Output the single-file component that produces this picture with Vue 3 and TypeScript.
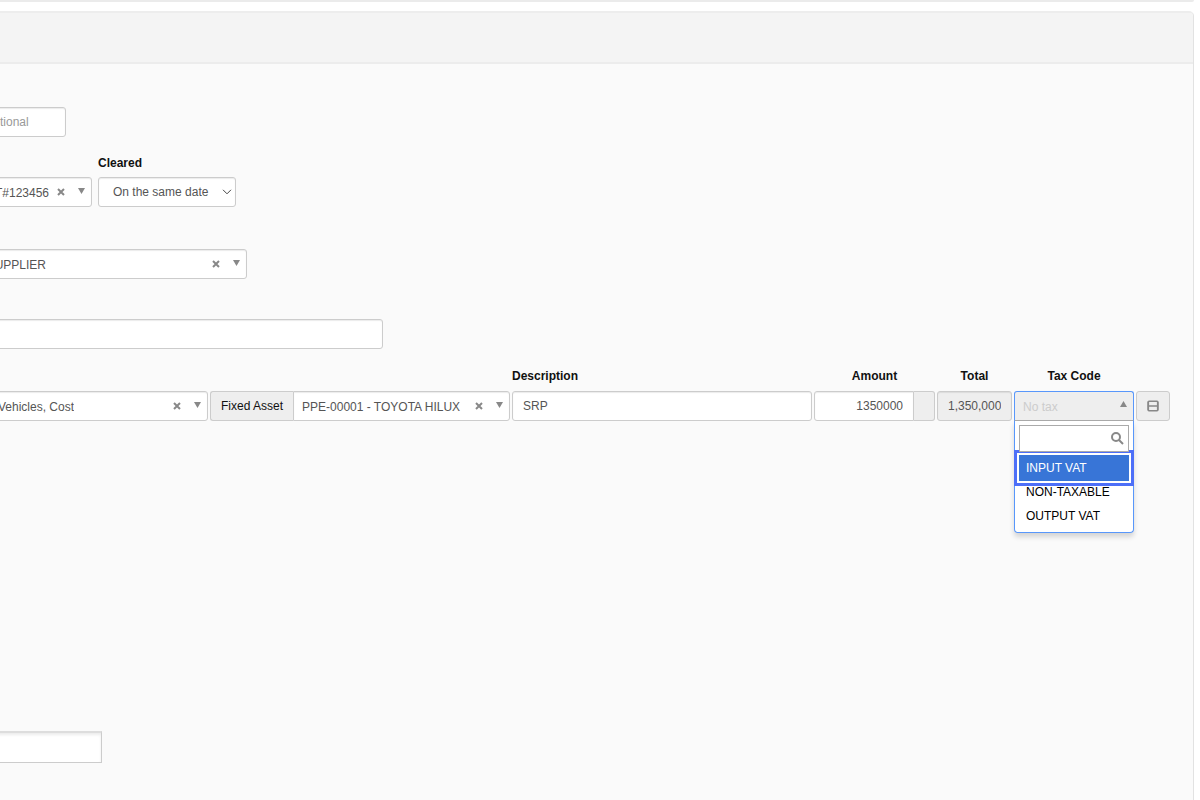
<script setup lang="ts">
import { ref } from 'vue'

const reference = ref('')
const notes = ref('')
const footer = ref('')
const description = ref('SRP')
const amount = ref('1350000')
const search = ref('')
const taxCodes: string[] = ['INPUT VAT', 'NON-TAXABLE', 'OUTPUT VAT']
const active = ref('INPUT VAT')
</script>

<template>
  <div class="page">
    <div class="strip"></div>
    <main class="panel">
      <header class="panel-head"></header>
      <form class="form" @submit.prevent>
        <input v-model="reference" class="field reference" type="text" placeholder="Optional" aria-label="Reference" />

        <div class="row cleared-row">
          <div class="picker searchable account">
            <select class="field" aria-label="Account"><option>CT#123456</option></select>
            <button class="clear" type="button" aria-label="Clear account">
              <svg viewBox="0 0 8 8"><path d="M1 1L7 7M7 1L1 7" /></svg>
            </button>
            <svg class="arrow" viewBox="0 0 7 6"><path d="M0 0H7L3.5 6Z" /></svg>
          </div>
          <div class="cell cleared">
            <label for="cleared">Cleared</label>
            <div class="picker">
              <select id="cleared" class="field"><option>On the same date</option></select>
              <svg class="chevron" viewBox="0 0 10 6"><path d="M1 .8L5 4.8L9 .8" /></svg>
            </div>
          </div>
        </div>

        <div class="picker searchable supplier">
          <select class="field" aria-label="Supplier"><option>SUPPLIER</option></select>
          <button class="clear" type="button" aria-label="Clear supplier">
            <svg viewBox="0 0 8 8"><path d="M1 1L7 7M7 1L1 7" /></svg>
          </button>
          <svg class="arrow" viewBox="0 0 7 6"><path d="M0 0H7L3.5 6Z" /></svg>
        </div>

        <input v-model="notes" class="field notes" type="text" aria-label="Notes" />

        <div class="lines">
          <div class="picker searchable ledger">
            <select class="field" aria-label="Ledger account"><option>Vehicles, Cost</option></select>
            <button class="clear" type="button" aria-label="Clear ledger account">
              <svg viewBox="0 0 8 8"><path d="M1 1L7 7M7 1L1 7" /></svg>
            </button>
            <svg class="arrow" viewBox="0 0 7 6"><path d="M0 0H7L3.5 6Z" /></svg>
          </div>

          <div class="group">
            <label class="addon" for="asset">Fixed Asset</label>
            <div class="picker searchable asset">
              <select id="asset" class="field"><option>PPE-00001 - TOYOTA HILUX</option></select>
              <button class="clear" type="button" aria-label="Clear fixed asset">
                <svg viewBox="0 0 8 8"><path d="M1 1L7 7M7 1L1 7" /></svg>
              </button>
              <svg class="arrow" viewBox="0 0 7 6"><path d="M0 0H7L3.5 6Z" /></svg>
            </div>
          </div>

          <div class="cell">
            <label for="description">Description</label>
            <input id="description" v-model="description" class="field" type="text" />
          </div>

          <div class="cell centered">
            <label for="amount">Amount</label>
            <div class="group">
              <input id="amount" v-model="amount" class="field amount" type="text" />
              <span class="addon end"></span>
            </div>
          </div>

          <div class="cell centered">
            <label for="total">Total</label>
            <input id="total" class="field total" type="text" value="1,350,000" readonly />
          </div>

          <div class="cell centered tax">
            <label for="tax">Tax Code</label>
            <button id="tax" class="tax-toggle" type="button" aria-haspopup="listbox" aria-expanded="true">
              <span>No tax</span>
              <svg class="up" viewBox="0 0 7 6"><path d="M0 6H7L3.5 0Z" /></svg>
            </button>
            <div class="menu">
              <div class="search">
                <input v-model="search" type="text" aria-label="Search tax codes" />
                <svg class="glass" viewBox="0 0 13 13"><circle cx="5" cy="5" r="4" /><path d="M8 8L12 12" /></svg>
              </div>
              <ul role="listbox" aria-label="Tax codes">
                <li
                  v-for="code in taxCodes"
                  :key="code"
                  role="option"
                  :aria-selected="code === active"
                  :class="{ active: code === active }"
                  @click="active = code"
                >{{ code }}</li>
              </ul>
            </div>
          </div>

          <button class="more" type="button" aria-label="Line options">
            <svg viewBox="0 0 12 12"><rect x="1" y="1.2" width="10" height="9.6" rx="1" /><path d="M1.4 2V10M10.6 2V10M1 6H11" /></svg>
          </button>
        </div>

        <input v-model="footer" class="field footer" type="text" aria-label="Footer" />
      </form>
    </main>
  </div>
</template>

<style>
body {
  margin: 0;
  background: #fff;
}
</style>

<style scoped>
.page,
.page * {
  box-sizing: border-box;
}
.page {
  min-height: 100vh;
  display: flex;
  flex-direction: column;
  padding-right: 6px;
  overflow: hidden;
  color: #111;
  font: 12px/18px "Liberation Sans", Arial, sans-serif;
}
.strip {
  height: 2px;
  margin-bottom: 9px;
  background: #ebebeb;
  border-radius: 0 0 4px 0;
}
.panel {
  flex: 1;
  background: #fafafa;
  border-top: 2px solid #ededed;
  border-right: 1px solid #e2e2e2;
  border-radius: 0 5px 0 0;
}
.panel-head {
  height: 51px;
  background: #f4f4f4;
  border-bottom: 2px solid #ececec;
  border-radius: 0 4px 0 0;
}
.form {
  display: flex;
  flex-direction: column;
  align-items: flex-start;
  margin-left: -31px;
  padding: 43px 23px 37px 0;
}
.field {
  display: block;
  width: 100%;
  height: 30px;
  margin: 0;
  padding: 0 10px;
  border: 1px solid #ccc;
  border-radius: 3px;
  background: #fff;
  box-shadow: inset 0 1px 1px rgba(0, 0, 0, 0.08);
  color: #555;
  font: inherit;
  outline: none;
  appearance: none;
}
.field::placeholder {
  color: #999;
  opacity: 1;
}
label {
  font-weight: bold;
}
.reference {
  width: 97px;
  padding-left: 14px;
}
.row {
  display: flex;
  align-items: flex-end;
  gap: 6px;
}
.cleared-row {
  margin-top: 17px;
}
.cell {
  display: flex;
  flex-direction: column;
  gap: 6px;
}
.centered > label {
  text-align: center;
}
.picker {
  position: relative;
}
.picker .field {
  padding-left: 8px;
}
.searchable .field {
  padding-top: 2px;
}
.account {
  width: 123px;
}
.account .field {
  padding-right: 42px;
  text-align-last: right;
}
.cleared {
  width: 138px;
  gap: 5px;
}
.cleared .field {
  padding-left: 14px;
}
.supplier {
  width: 278px;
  margin-top: 42px;
}
.supplier .field {
  padding-right: 200px;
  text-align-last: right;
}
.notes {
  width: 414px;
  margin-top: 40px;
}
.ledger .field {
  padding-right: 133px;
  text-align-last: right;
}
.clear {
  position: absolute;
  top: 11px;
  right: 27px;
  width: 8px;
  height: 8px;
  padding: 0;
  border: 0;
  background: none;
}
.clear svg {
  display: block;
  fill: none;
  stroke: #888;
  stroke-width: 2;
}
.arrow {
  position: absolute;
  top: 11px;
  right: 7px;
  width: 7px;
  height: 6px;
  fill: #888;
}
.chevron {
  position: absolute;
  top: 12px;
  right: 4px;
  width: 10px;
  height: 6px;
  fill: none;
  stroke: #444;
}
.lines {
  align-self: stretch;
  display: grid;
  grid-template-columns: 239px 300px minmax(0, 1fr) 121px 75px 120px 34px;
  gap: 2px;
  align-items: end;
  margin-top: 18px;
}
.group {
  display: flex;
}
.addon {
  flex: none;
  height: 30px;
  padding: 0 10px;
  border: 1px solid #ccc;
  border-right: 0;
  border-radius: 3px 0 0 3px;
  background: #eee;
  font-weight: normal;
  line-height: 28px;
}
.addon.end {
  width: 21px;
  border: 1px solid #ccc;
  border-left: 0;
  border-radius: 0 3px 3px 0;
}
.asset {
  flex: 1;
}
.asset .field {
  border-radius: 0 3px 3px 0;
}
.amount {
  flex: 1;
  min-width: 0;
  border-radius: 3px 0 0 3px;
  text-align: right;
}
.total {
  background: #eee;
  text-align: right;
}
.tax {
  position: relative;
}
.tax-toggle {
  display: flex;
  align-items: center;
  justify-content: space-between;
  height: 30px;
  padding: 2px 6px 0 8px;
  border: 1px solid #5897fb;
  border-bottom-color: #aaa;
  border-radius: 3px 3px 0 0;
  background: #eee;
  color: #ccc;
  font: inherit;
}
.up {
  width: 7px;
  height: 6px;
  margin-bottom: 6px;
  fill: #888;
}
.menu {
  position: absolute;
  top: 100%;
  left: 0;
  width: 100%;
  padding-top: 4px;
  border: 1px solid #5897fb;
  border-top: 0;
  border-radius: 0 0 4px 4px;
  background: #fff;
  box-shadow: 0 4px 5px rgba(0, 0, 0, 0.15);
}
.search {
  position: relative;
  margin: 0 4px;
}
.search input {
  display: block;
  width: 100%;
  height: 27px;
  padding: 0 22px 0 5px;
  border: 1px solid #aaa;
  background: #fff;
  font: inherit;
  outline: none;
}
.glass {
  position: absolute;
  top: 7px;
  right: 5px;
  width: 13px;
  height: 13px;
  fill: none;
  stroke: #888;
  stroke-width: 2;
}
ul {
  margin: 0;
  padding: 3px 4px 4px;
  list-style: none;
}
li {
  height: 24px;
  padding: 0 7px;
  color: #000;
  line-height: 24px;
  white-space: nowrap;
}
.active {
  height: 26px;
  margin-bottom: -1px;
  background: #3875d7;
  color: #fff;
  line-height: 26px;
  outline: 2px solid #fff;
  box-shadow: 0 0 0 5px #4d6ff8;
}
.more {
  display: flex;
  align-items: center;
  justify-content: center;
  height: 30px;
  padding: 0;
  border: 1px solid #ccc;
  border-radius: 3px;
  background: #eee;
}
.more svg {
  width: 12px;
  height: 12px;
  fill: none;
  stroke: #888;
  stroke-width: 1.4;
}
.footer {
  width: 133px;
  height: 32px;
  margin-top: 310px;
  border-top: 2px solid #ddd;
  border-radius: 0;
  box-shadow: inset 0 2px 3px rgba(0, 0, 0, 0.08);
}
</style>
